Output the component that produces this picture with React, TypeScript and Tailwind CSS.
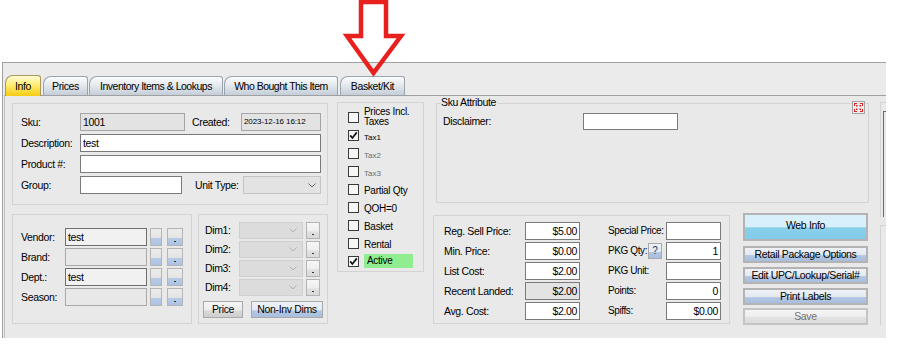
import React from "react";

const lbl = "text-[10.5px] tracking-[-0.35px] leading-none text-black whitespace-nowrap";
const lbl2 = "text-[10px] tracking-[-0.4px] leading-none text-black whitespace-nowrap";

const blueBtn =
  "bg-[linear-gradient(180deg,#eef2f7_0%,#e3e9f1_55%,#b3c7e3_58%,#a9bfdf_100%)]";
const grayBtn =
  "bg-[linear-gradient(180deg,#f4f4f4_0%,#ececec_55%,#d9d9d9_58%,#cfcfcf_100%)]";

function Check({ checked }: { checked?: boolean }) {
  return (
    <div className="w-[11px] h-[11px] border border-[#3a3a3a] bg-[#f6f6f6] flex items-center justify-center shrink-0">
      {checked && (
        <svg width="9" height="9" viewBox="0 0 9 9">
          <path d="M1.2 4.4 L3.4 7 L7.8 1.4" stroke="#111" strokeWidth="1.7" fill="none" />
        </svg>
      )}
    </div>
  );
}

function Chevron({ color }: { color: string }) {
  return (
    <svg width="8" height="5" viewBox="0 0 8 5">
      <path d="M0.5 0.5 L4 4 L7.5 0.5" stroke={color} strokeWidth="1" fill="none" />
    </svg>
  );
}

function SmallBtn({ cls, dot }: { cls: string; dot?: boolean }) {
  return (
    <div className={`${cls} h-full border border-[#b4b4b4] flex items-end justify-center pb-[3px]`}>
      {dot && <div className="w-[2px] h-[1px] bg-[#333]" />}
    </div>
  );
}

function CheckRow({
  checked,
  children,
  cls,
}: {
  checked?: boolean;
  children: React.ReactNode;
  cls?: string;
}) {
  return (
    <div className="h-[18px] flex items-center">
      <Check checked={checked} />
      <div className={`ml-[5px] ${cls ?? ""}`}>{children}</div>
    </div>
  );
}

function PriceInput({ value, gray }: { value: string; gray?: boolean }) {
  return (
    <div
      className={`w-[55px] h-full border border-[#7a7a7a] flex items-center justify-end pr-[2px] shrink-0 ${
        gray ? "bg-[#e3e3e3]" : "bg-white"
      }`}
    >
      <span className={lbl}>{value}</span>
    </div>
  );
}

export default function App() {
  return (
    <div className="relative w-[902px] h-[354px] bg-white overflow-hidden pt-[62px] font-['Liberation_Sans',Arial,sans-serif]">
      {/* window */}
      <div className="ml-[2px] w-[884px] h-[276px] bg-[#ebebeb] border-t border-l border-[#a0a0a0] overflow-hidden flex flex-col">
        {/* tabs */}
        <div className="h-[32px] flex items-end pl-[2px] shrink-0">
          <div className="relative z-10 mb-[-1px] h-[21px] w-[36px] rounded-tl-[8px] rounded-tr-[3px] border border-b-0 border-[#a89a5a] bg-[linear-gradient(180deg,#fffbd8_0%,#ffec70_45%,#f5cc12_100%)] flex items-center justify-center">
            <span className="text-[10.5px] tracking-[-0.4px] leading-none">Info</span>
          </div>
          <div className="ml-[2px] h-[19px] w-[45px] rounded-tl-[8px] rounded-tr-[3px] border border-b-0 border-[#9aa4ae] bg-[linear-gradient(180deg,#fbfcfd_0%,#e4e9ee_45%,#c4ced8_100%)] flex items-center justify-center">
            <span className="text-[10.5px] tracking-[-0.4px] leading-none">Prices</span>
          </div>
          <div className="ml-[1px] h-[19px] w-[134px] rounded-tl-[8px] rounded-tr-[3px] border border-b-0 border-[#9aa4ae] bg-[linear-gradient(180deg,#fbfcfd_0%,#e4e9ee_45%,#c4ced8_100%)] flex items-center justify-center">
            <span className="text-[10.5px] tracking-[-0.5px] leading-none">Inventory Items &amp; Lookups</span>
          </div>
          <div className="ml-[1px] h-[19px] w-[114px] rounded-tl-[8px] rounded-tr-[3px] border border-b-0 border-[#9aa4ae] bg-[linear-gradient(180deg,#fbfcfd_0%,#e4e9ee_45%,#c4ced8_100%)] flex items-center justify-center">
            <span className="text-[10.5px] tracking-[-0.5px] leading-none">Who Bought This Item</span>
          </div>
          <div className="ml-[2px] h-[19px] w-[65px] rounded-tl-[8px] rounded-tr-[3px] border border-b-0 border-[#9aa4ae] bg-[linear-gradient(180deg,#fbfcfd_0%,#e4e9ee_45%,#c4ced8_100%)] flex items-center justify-center">
            <span className="text-[10.5px] tracking-[-0.4px] leading-none">Basket/Kit</span>
          </div>
        </div>

        {/* tab page */}
        <div className="ml-[1px] flex-1 border-t border-l border-t-[#a0a0a0] border-l-[#c2c2c2] bg-[#e9e9e9] flex items-start pl-[7px] pt-[6px]">
          {/* left column */}
          <div className="w-[316px] flex flex-col shrink-0">
            {/* group 1 */}
            <div className="mt-[1px] h-[102px] border border-[#d3d3d3] pt-[9px] pl-[8px] flex flex-col gap-[3px]">
              <div className="flex h-[18px] items-center">
                <span className={`${lbl} w-[59px]`}>Sku:</span>
                <div className="w-[105px] h-full border border-[#a5a5a5] bg-[#e3e3e3] flex items-center pl-[2px]">
                  <span className={lbl}>1001</span>
                </div>
                <span className={`${lbl} ml-[7px] w-[49px]`}>Created:</span>
                <div className="w-[80px] h-full border border-[#a5a5a5] bg-[#e3e3e3] flex items-center pl-[2px]">
                  <span className="text-[8px] leading-none tracking-[-0.1px]">2023-12-16 16:12</span>
                </div>
              </div>
              <div className="flex h-[18px] items-center">
                <span className={`${lbl} w-[59px]`}>Description:</span>
                <div className="w-[241px] h-full border border-[#7a7a7a] bg-white flex items-center pl-[2px]">
                  <span className={lbl}>test</span>
                </div>
              </div>
              <div className="flex h-[18px] items-center">
                <span className={`${lbl} w-[59px]`}>Product #:</span>
                <div className="w-[241px] h-full border border-[#7a7a7a] bg-white" />
              </div>
              <div className="flex h-[18px] items-center">
                <span className={`${lbl} w-[59px]`}>Group:</span>
                <div className="w-[102px] h-full border border-[#7a7a7a] bg-white" />
                <span className={`${lbl} ml-[13px] w-[48px]`}>Unit Type:</span>
                <div className="w-[78px] h-full border border-[#c4c4c4] bg-[#e3e3e3] flex items-center justify-end pr-[4px]">
                  <Chevron color="#666" />
                </div>
              </div>
            </div>

            {/* group row */}
            <div className="mt-[9px] h-[110px] flex gap-[6px]">
              {/* vendor */}
              <div className="w-[180px] h-full border border-[#d3d3d3] pt-[13px] pl-[8px] flex flex-col gap-[2px]">
                {[
                  { l: "Vendor:", v: "test" },
                  { l: "Brand:", v: "" },
                  { l: "Dept.:", v: "test" },
                  { l: "Season:", v: "" },
                ].map((r) => (
                  <div key={r.l} className="h-[18px] flex items-center">
                    <span className={`${lbl} w-[44px]`}>{r.l}</span>
                    <div
                      className={`w-[82px] h-full border flex items-center pl-[2px] ${
                        r.v ? "border-[#6f6f6f] bg-[#f1f1f1]" : "border-[#a8a8a8] bg-[#e8e8e8]"
                      }`}
                    >
                      <span className={lbl}>{r.v}</span>
                    </div>
                    <div className="ml-[3px] w-[12px] h-full">
                      <SmallBtn cls="bg-[linear-gradient(180deg,#ececec_0%,#e4e4e4_55%,#b7cbe6_58%,#acc3e3_100%)]" />
                    </div>
                    <div className="ml-[5px] w-[16px] h-full">
                      <SmallBtn cls="bg-[linear-gradient(180deg,#ececec_0%,#e4e4e4_55%,#b7cbe6_58%,#acc3e3_100%)]" dot />
                    </div>
                  </div>
                ))}
              </div>
              {/* dims */}
              <div className="w-[130px] h-full border border-[#d3d3d3] pt-[7px] pl-[6px] flex flex-col">
                <div className="flex flex-col gap-[2px]">
                  {["Dim1:", "Dim2:", "Dim3:", "Dim4:"].map((d) => (
                    <div key={d} className="h-[17px] flex items-center">
                      <span className={`${lbl} w-[34px]`}>{d}</span>
                      <div className="w-[64px] h-full border border-[#cfcfcf] bg-[#dcdcdc] flex items-center justify-end pr-[5px]">
                        <Chevron color="#b0b0b0" />
                      </div>
                      <div className="ml-[3px] w-[14px] h-full">
                        <SmallBtn cls="bg-[linear-gradient(180deg,#f6f6f6_0%,#eeeeee_55%,#e0e0e0_58%,#dadada_100%)]" dot />
                      </div>
                    </div>
                  ))}
                </div>
                <div className="mt-[5px] ml-[-2px] h-[17px] flex">
                  <div className={`w-[40px] h-full border border-[#a9a9a9] ${grayBtn} flex items-center justify-center`}>
                    <span className={lbl}>Price</span>
                  </div>
                  <div className={`ml-[8px] w-[72px] h-full border border-[#a9a9a9] ${blueBtn} flex items-center justify-center`}>
                    <span className={lbl}>Non-Inv Dims</span>
                  </div>
                </div>
              </div>
            </div>
          </div>

          {/* checkbox column */}
          <div className="ml-[9px] w-[87px] h-[170px] border border-[#d3d3d3] pt-[5px] pl-[10px] flex flex-col shrink-0">
            <div className="h-[18px] flex items-center">
              <Check />
              <div className="ml-[5px] text-[10px] tracking-[-0.3px] leading-[10px]">
                Prices Incl.
                <br />
                Taxes
              </div>
            </div>
            <CheckRow checked>
              <span className="text-[8px] leading-none">Tax1</span>
            </CheckRow>
            <CheckRow>
              <span className="text-[8px] leading-none text-[#6d6d6d]">Tax2</span>
            </CheckRow>
            <CheckRow>
              <span className="text-[8px] leading-none text-[#6d6d6d]">Tax3</span>
            </CheckRow>
            <CheckRow>
              <span className="text-[10px] tracking-[-0.3px] leading-none">Partial Qty</span>
            </CheckRow>
            <CheckRow>
              <span className="text-[10px] tracking-[-0.3px] leading-none">QOH=0</span>
            </CheckRow>
            <CheckRow>
              <span className="text-[10px] tracking-[-0.3px] leading-none">Basket</span>
            </CheckRow>
            <CheckRow>
              <span className="text-[10px] tracking-[-0.3px] leading-none">Rental</span>
            </CheckRow>
            <div className="h-[18px] flex items-center">
              <Check checked />
              <div className="ml-[5px] w-[49px] h-[14px] bg-[#90ee90] flex items-center pl-[3px]">
                <span className="text-[10px] tracking-[-0.3px] leading-none">Active</span>
              </div>
            </div>
          </div>

          {/* right area */}
          <div className="ml-[9px] w-[436px] flex flex-col shrink-0">
            <div className="relative ml-[3px] mt-[1px] w-[433px] h-[100px] border border-[#d3d3d3] pt-[9px] pl-[6px]">
              <span className={`absolute left-[4px] top-[-7px] bg-[#e9e9e9] pr-[2px] ${lbl}`}>Sku Attribute</span>
              <div className="absolute right-[3px] top-[-3px] w-[13px] h-[13px] border border-[#a3a3a3] bg-[#eeeeee] flex items-center justify-center">
                <svg width="11" height="11" viewBox="0 0 11 11">
                  <g fill="#e02020">
                    <path d="M1 1 H4 L4 2 H2 V4 H1 Z" />
                    <path d="M10 1 H7 V2 H9 V4 H10 Z" />
                    <path d="M1 10 H4 V9 H2 V7 H1 Z" />
                    <path d="M10 10 H7 V9 H9 V7 H10 Z" />
                    <rect x="3" y="3" width="1.5" height="1.5" />
                    <rect x="6.5" y="3" width="1.5" height="1.5" />
                    <rect x="3" y="6.5" width="1.5" height="1.5" />
                    <rect x="6.5" y="6.5" width="1.5" height="1.5" />
                  </g>
                </svg>
              </div>
              <div className="h-[17px] flex items-center">
                <span className={`${lbl} w-[140px]`}>Disclaimer:</span>
                <div className="w-[95px] h-full border border-[#7a7a7a] bg-white" />
              </div>
            </div>

            <div className="mt-[10px] flex items-start">
              {/* prices */}
              <div className="mt-[2px] w-[297px] h-[109px] border border-[#d3d3d3] pt-[6px] pl-[10px] flex flex-col gap-[2px]">
                <div className="h-[18px] flex items-center">
                  <span className={`${lbl} w-[81px]`}>Reg. Sell Price:</span>
                  <PriceInput value="$5.00" />
                  <span className={`${lbl2} ml-[28px] w-[58px]`}>Special Price:</span>
                  <PriceInput value="" />
                </div>
                <div className="h-[18px] flex items-center">
                  <span className={`${lbl} w-[81px]`}>Min. Price:</span>
                  <PriceInput value="$0.00" />
                  <span className={`${lbl2} ml-[28px] w-[40px]`}>PKG Qty:</span>
                  <div className={`w-[14px] h-[16px] border border-[#a9a9a9] ${blueBtn} flex items-center justify-center shrink-0`}>
                    <span className="text-[10px] leading-none text-[#1a3a6a]">?</span>
                  </div>
                  <div className="ml-[4px] h-full">
                    <PriceInput value="1" />
                  </div>
                </div>
                <div className="h-[18px] flex items-center">
                  <span className={`${lbl} w-[81px]`}>List Cost:</span>
                  <PriceInput value="$2.00" />
                  <span className={`${lbl2} ml-[28px] w-[58px]`}>PKG Unit:</span>
                  <PriceInput value="" />
                </div>
                <div className="h-[18px] flex items-center">
                  <span className={`${lbl} w-[81px]`}>Recent Landed:</span>
                  <PriceInput value="$2.00" gray />
                  <span className={`${lbl2} ml-[28px] w-[58px]`}>Points:</span>
                  <PriceInput value="0" />
                </div>
                <div className="h-[18px] flex items-center">
                  <span className={`${lbl} w-[81px]`}>Avg. Cost:</span>
                  <PriceInput value="$2.00" />
                  <span className={`${lbl2} ml-[28px] w-[58px]`}>Spiffs:</span>
                  <PriceInput value="$0.00" />
                </div>
              </div>

              {/* buttons */}
              <div className="ml-[13px] w-[125px] flex flex-col">
                <div className="h-[28px] border-2 border-[#b3b3b3] bg-[linear-gradient(180deg,#d8f0fb_0%,#d8f0fb_50%,#88cfea_53%,#82cce9_100%)] flex justify-center pt-[5px]">
                  <span className={lbl}>Web Info</span>
                </div>
                <div className={`mt-[5px] h-[17px] border-2 border-[#b3b3b3] ${blueBtn} flex items-center justify-center`}>
                  <span className={lbl}>Retail Package Options</span>
                </div>
                <div className={`mt-[4px] h-[17px] border-2 border-[#b3b3b3] ${blueBtn} flex items-center justify-center`}>
                  <span className={lbl}>Edit UPC/Lookup/Serial#</span>
                </div>
                <div className={`mt-[4px] h-[17px] border-2 border-[#b3b3b3] ${blueBtn} flex items-center justify-center`}>
                  <span className={lbl}>Print Labels</span>
                </div>
                <div className="mt-[3px] h-[17px] border-2 border-[#c4c4c4] bg-[linear-gradient(180deg,#f4f4f4_0%,#eeeeee_50%,#e2e2e2_53%,#dcdcdc_100%)] flex items-center justify-center">
                  <span className="text-[10.5px] tracking-[-0.35px] leading-none text-[#707070]">Save</span>
                </div>
              </div>
            </div>
          </div>

          {/* partially visible right panel */}
          <div className="ml-[11px] w-[20px] flex flex-col shrink-0">
            <div className="h-[115px] border-l border-t border-[#d3d3d3]">
              <div className="mt-[8px] ml-[2px] h-[106px] border-l border-t border-[#6a6a6a]" />
            </div>
            <div className="mt-[8px] h-[100px] border-l border-t border-[#d3d3d3]" />
          </div>
        </div>
      </div>

      {/* red annotation arrow */}
      <svg
        className="absolute left-0 top-0 pointer-events-none"
        width="902"
        height="80"
        viewBox="0 0 902 80"
      >
        <path
          d="M361 2 H386 V36 H401 L373.5 73 L347 36 H361 Z"
          fill="none"
          stroke="#e8211f"
          strokeWidth="4.5"
          strokeLinejoin="miter"
        />
      </svg>
    </div>
  );
}
